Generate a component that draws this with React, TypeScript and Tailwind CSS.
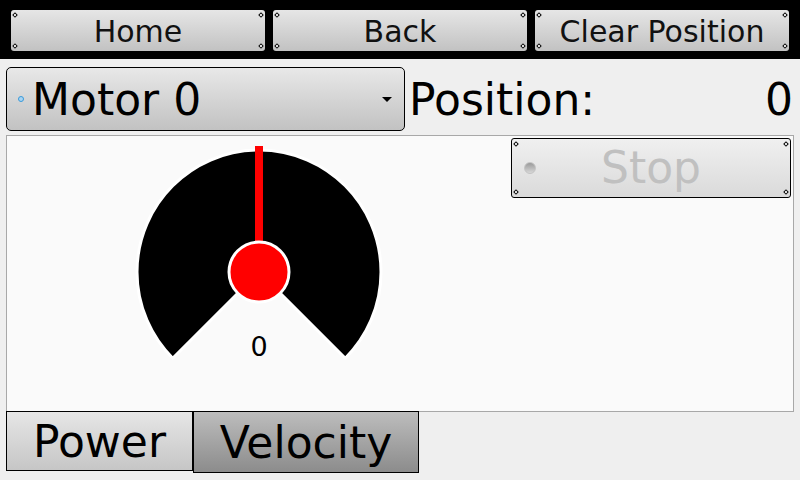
import React from "react";

function Dots() {
  const base = "absolute w-[4px] h-[4px] rotate-45 border border-black bg-white";
  return (
    <>
      <span className={`${base} left-[2px] top-[3px]`} />
      <span className={`${base} right-[2px] top-[3px]`} />
      <span className={`${base} left-[2px] bottom-[3px]`} />
      <span className={`${base} right-[2px] bottom-[3px]`} />
    </>
  );
}

function TopButton({ label }: { label: string }) {
  return (
    <div className="relative h-[41px] rounded-[3px] bg-gradient-to-b from-[#e6e6e6] to-[#c2c2c2] flex items-center justify-center pt-[2px] text-[30px] text-[#111] leading-none">
      <Dots />
      <span>{label}</span>
    </div>
  );
}

function Gauge() {
  const cx = 130;
  const cy = 132;
  const R = 122;
  const d = R * Math.SQRT1_2;
  return (
    <svg width="260" height="230" viewBox="0 0 260 230" className="block">
      <path
        d={`M ${cx} ${cy} L ${cx - d} ${cy + d} A ${R} ${R} 0 1 1 ${cx + d} ${cy + d} Z`}
        fill="#000"
        stroke="#fff"
        strokeWidth="3"
        strokeLinejoin="round"
      />
      <rect x={cx - 4} y={6} width={8} height={cy - 6} fill="#ff0000" />
      <circle cx={cx} cy={cy} r={30} fill="#ff0000" stroke="#fff" strokeWidth="3" />
      <text
        x={cx}
        y={216}
        textAnchor="middle"
        fontFamily="'DejaVu Sans', sans-serif"
        fontSize="27"
        fill="#000"
      >
        0
      </text>
    </svg>
  );
}

export default function App() {
  return (
    <div className="w-[800px] h-[480px] bg-[#efefef] flex flex-col overflow-hidden font-['DejaVu_Sans',sans-serif] text-black">
      <div className="h-[59px] bg-black px-[11px] pt-[10px] grid grid-cols-3 gap-[8px] items-start shrink-0">
        <TopButton label="Home" />
        <TopButton label="Back" />
        <TopButton label="Clear Position" />
      </div>

      <div className="mt-[8px] h-[64px] flex items-center pl-[6px] pr-[7px] shrink-0">
        <div className="relative w-[399px] h-[64px] rounded-[5px] border border-black bg-gradient-to-b from-[#e8e8e8] to-[#c2c2c2] flex items-center">
          <span className="ml-[11px] w-[6px] h-[6px] rounded-full border border-[#3a9ad9] bg-[#a9d4f2]" />
          <span className="ml-[8px] mt-[2px] text-[44px] leading-none">Motor 0</span>
          <span className="ml-auto mr-[12px] w-0 h-0 border-l-[5px] border-r-[5px] border-t-[5px] border-l-transparent border-r-transparent border-t-black" />
        </div>
        <span className="ml-[4px] mt-[2px] text-[44px] leading-none">Position:</span>
        <span className="ml-auto mt-[2px] text-[44px] leading-none">0</span>
      </div>

      <div className="mt-[4px] mx-[6px] h-[277px] bg-[#fafafa] border border-[#a8a8a8] flex items-start shrink-0">
        <div className="ml-[122px] mt-[4px]">
          <Gauge />
        </div>
        <div className="relative ml-auto mr-[2px] mt-[2px] w-[280px] h-[60px] rounded-[3px] border border-black bg-gradient-to-b from-[#f0f0f0] to-[#dadada] flex items-center justify-center">
          <Dots />
          <span className="absolute left-[12px] top-[23px] w-[12px] h-[12px] rounded-full bg-gradient-to-b from-[#9a9a9a] to-[#d8d8d8] border border-[#c4c4c4]" />
          <span className="text-[44px] leading-none text-[#c0c0c0]">Stop</span>
        </div>
      </div>

      <div className="-mt-[1px] ml-[6px] flex items-start shrink-0">
        <div className="w-[187px] h-[60px] border border-black bg-gradient-to-b from-[#e6e6e6] to-[#c6c6c6] flex items-center justify-center pt-[2px] text-[44px] leading-none">
          Power
        </div>
        <div className="w-[226px] h-[62px] border border-black bg-gradient-to-b from-[#bdbdbd] to-[#8c8c8c] flex items-center justify-center pt-[2px] text-[44px] leading-none">
          Velocity
        </div>
      </div>
    </div>
  );
}
